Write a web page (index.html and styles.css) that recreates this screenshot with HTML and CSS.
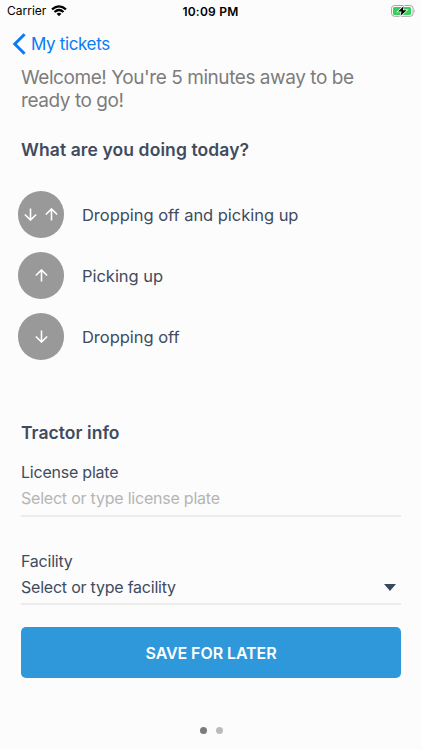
FILE: index.html
```html
<!DOCTYPE html>
<html lang="en">
<head>
<meta charset="utf-8">
<meta name="viewport" content="width=device-width, initial-scale=1">
<title>My tickets</title>
<link rel="stylesheet" href="styles.css">
</head>
<body>
<div class="screen">
  <header class="status">
    <div class="carrier"><span>Carrier</span>
      <svg width="16" height="12" viewBox="0 0 16 12" fill="none" stroke="#000" stroke-width="2.2"><path d="M1 4.4Q8-1.8 15 4.4"/><path d="M3.5 7Q8 3 12.5 7"/><path d="M8 11.2 5.6 8.8Q8 6.9 10.4 8.8Z" fill="#000" stroke="none"/></svg>
    </div>
    <div class="time">10:09 PM</div>
    <svg class="battery" width="25" height="12" viewBox="0 0 25 12"><rect x=".5" y=".5" width="21.6" height="10.8" rx="3" fill="none" stroke="#a5a5a5"/><path d="M23.3 4q1.5 2 0 4z" fill="#a5a5a5"/><rect x="2" y="2" width="18" height="8" rx="1.5" fill="#35cf5b"/><path d="M12.6 1.2 7 6.6H10.5L9.6 10.8 15.6 5.3H12Z" fill="#000" stroke="#fcfcfc" stroke-width="1.5" paint-order="stroke"/></svg>
  </header>
  <nav class="nav">
    <svg width="14" height="22" viewBox="0 0 14 22" fill="none" stroke="#087bf5" stroke-width="3"><path d="M12.6 1.2 2.8 11 12.6 20.8"/></svg>
    <span>My tickets</span>
  </nav>
  <main>
    <p class="welcome">Welcome! You're 5 minutes away to be<br>ready to go!</p>
    <h2 class="question">What are you doing today?</h2>
    <div class="options">
      <div class="option"><span class="circle"><svg class="arrow" viewBox="0 0 14 14"><path d="M7 .5V13M.9 7 7 13 13.1 7"/></svg><svg class="arrow" viewBox="0 0 14 14"><path d="M7 13.5V1M.9 7 7 1 13.1 7"/></svg></span><span class="name">Dropping off and picking up</span></div>
      <div class="option"><span class="circle"><svg class="arrow" viewBox="0 0 14 14"><path d="M7 13.5V1M.9 7 7 1 13.1 7"/></svg></span><span class="name">Picking up</span></div>
      <div class="option"><span class="circle"><svg class="arrow" viewBox="0 0 14 14"><path d="M7 .5V13M.9 7 7 13 13.1 7"/></svg></span><span class="name">Dropping off</span></div>
    </div>
    <h2 class="tractor">Tractor info</h2>
    <div class="field plate"><label>License plate</label><div class="value placeholder">Select or type license plate</div></div>
    <div class="field facility"><label>Facility</label><div class="value select"><span>Select or type facility</span><svg width="12" height="7" viewBox="0 0 12 7"><path d="M0 0h12L6 7z" fill="#3b4760"/></svg></div></div>
    <button class="save">SAVE FOR LATER</button>
  </main>
  <footer class="dots"><i class="dot on"></i><i class="dot"></i></footer>
</div>
</body>
</html>
```
FILE: styles.css
```css
* { box-sizing: border-box; }
body { margin: 0; background: #fcfcfc; font-family: Inter, sans-serif; color: #414b5e; }
.screen { width: 422px; height: 750px; display: flex; flex-direction: column; overflow: hidden; white-space: nowrap; }
svg { display: block; flex: none; }
.status { height: 22px; display: grid; grid-template-columns: 1fr auto 1fr; align-items: center; padding: 0 6px 0 7px; color: #000; font-size: 12px; }
.carrier { display: flex; align-items: center; gap: 5px; height: 21px; align-self: start; }
.time { font-weight: 600; letter-spacing: .25px; margin-left: -2px; }
.battery { justify-self: end; align-self: start; margin-top: 4.6px; }
.nav { height: 43px; display: flex; align-items: center; gap: 5px; padding-left: 12px; color: #087bf5; font-size: 17px; letter-spacing: -.36px; }
main { padding: 0 21px; display: flex; flex-direction: column; }
.welcome { margin: 1px 0 0; height: 69px; font-size: 19px; line-height: 23px; letter-spacing: -.44px; color: #7c7c7c; }
h2 { margin: 0; font-size: 17.5px; line-height: 30px; font-weight: 600; letter-spacing: .1px; }
.options { display: flex; flex-direction: column; gap: 14px; margin: 26px 0 0 -3.3px; }
.option { display: flex; align-items: center; gap: 17.7px; font-size: 16.5px; letter-spacing: -.03px; height: 47px; }
.name { line-height: 21px; padding-top: 2px; }
.circle { width: 46.6px; height: 46.6px; border-radius: 50%; background: #999; display: flex; align-items: center; justify-content: center; gap: 8px; }
.arrow { width: 13px; height: 13px; fill: none; stroke: #fff; stroke-width: 1.7; }
.tractor { margin-top: 58px; letter-spacing: .05px; }
.field { border-bottom: 2px solid #ececec; font-size: 16px; letter-spacing: -.22px; }
.field label { display: block; line-height: 26px; }
.value { height: 26px; line-height: 26px; }
.plate { height: 69px; padding-top: 11px; }
.facility { height: 88px; padding-top: 31px; }
.placeholder { color: #b5b5b5; }
.select { display: flex; align-items: center; justify-content: space-between; padding-right: 5px; }
.save { margin: 22.4px 0 0 -.4px; height: 51px; border: 0; border-radius: 5px; background: #2e98da; color: #fff; font: 600 16px Inter, sans-serif; letter-spacing: -.08px; width: 380.8px; }
.dots { display: flex; justify-content: center; gap: 9px; margin-top: 49px; }
.dot { width: 7px; height: 7px; border-radius: 50%; background: #bbb; }
.on { background: #7b7b7b; }
```
